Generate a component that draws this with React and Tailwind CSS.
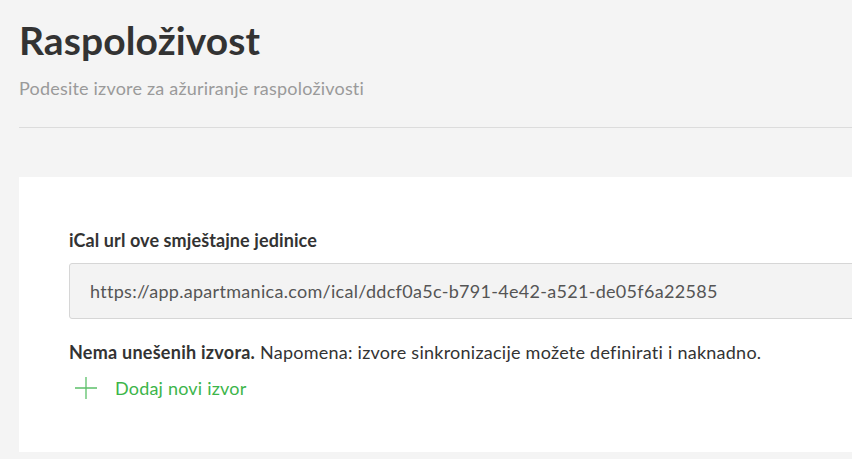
export default function App() {
  return (
    <div
      className="w-[852px] h-[459px] overflow-hidden bg-[#f4f4f4]"
      style={{ fontFamily: 'Lato, "Noto Sans", sans-serif' }}
    >
      <div className="w-[1100px] pl-[19px]">
        {/* Page header */}
        <div className="pt-[16px]">
          <h1 className="text-[39px] leading-[48px] font-bold text-[#333333] tracking-[0.1px]">
            Raspoloživost
          </h1>
          <p className="mt-[13px] text-[18px] leading-[22px] tracking-[0.2px] text-[#9a9a9a]">
            Podesite izvore za ažuriranje raspoloživosti
          </p>
        </div>

        <div className="mt-[28px] border-t border-[#dcdcdc]" />

        {/* Sync card */}
        <div className="mt-[49px] bg-white h-[275px] pl-[50px] pt-[52px]">
          <label className="block text-[18px] leading-[22px] font-bold tracking-[0.1px] text-[#333333]">
            iCal url ove smještajne jedinice
          </label>
          <div className="mt-[12px] h-[56px] flex items-center px-[20px] bg-[#f3f3f3] border border-[#d6d6d6] rounded-[3px]">
            <span className="text-[18px] tracking-[0.3px] text-[#555555]">
              https://app.apartmanica.com/ical/ddcf0a5c-b791-4e42-a521-de05f6a22585
            </span>
          </div>
          <p className="mt-[22px] text-[18px] leading-[22px] tracking-[0.25px] text-[#333333]">
            <span className="font-bold">Nema unešenih izvora.</span> Napomena: izvore sinkronizacije možete definirati i naknadno.
          </p>
          <button className="mt-[14px] flex items-center gap-[18px] text-[#3cb54a]">
            <svg width="22" height="22" viewBox="0 0 22 22" className="ml-[6px]">
              <path d="M11 0v22M0 11h22" stroke="#5cc06a" strokeWidth="1.3" />
            </svg>
            <span className="text-[18px] leading-[22px] tracking-[0.2px]">Dodaj novi izvor</span>
          </button>
        </div>
      </div>
    </div>
  );
}
